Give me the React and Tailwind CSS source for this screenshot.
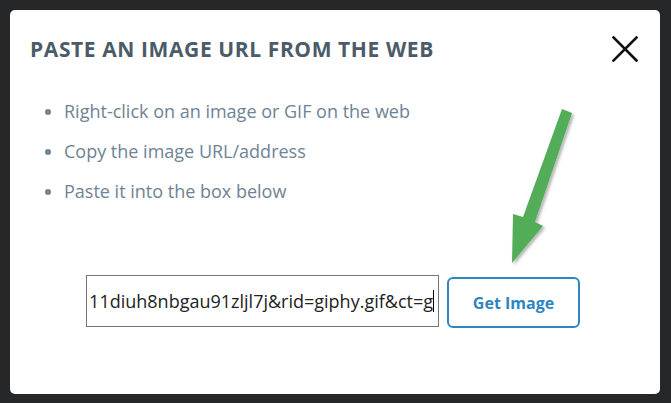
export default function App() {
  return (
    <div className="w-[671px] h-[403px] bg-[#252728] p-[10px] pr-[11px] pb-[9px]">
      <div className="relative w-full h-full bg-white rounded-[5px] flex flex-col" style={{ fontFamily: '"Open Sans", "Liberation Sans", sans-serif' }}>
        <div className="flex items-start justify-between pl-[20px] pr-[22px] pt-[21px]">
          <h1 className="text-[21px] font-bold text-[#4b5b68] leading-[36px] tracking-[0.6px]">PASTE AN IMAGE URL FROM THE WEB</h1>
          <button className="w-[26px] h-[26px] mt-[5px]">
            <svg viewBox="0 0 26 26" className="w-[26px] h-[26px]">
              <path d="M1.5 1.5 L24.5 24.5 M24.5 1.5 L1.5 24.5" stroke="#111" strokeWidth="2.6" strokeLinecap="square" fill="none" />
            </svg>
          </button>
        </div>
        <ul className="mt-[31px] pl-[35px] flex flex-col gap-[13px] text-[18px] text-[#6e8394] leading-[27px]">
          <li className="flex items-center gap-[13px]"><span className="w-[6px] h-[6px] rounded-full bg-[#6e8394]" />Right-click on an image or GIF on the web</li>
          <li className="flex items-center gap-[13px]"><span className="w-[6px] h-[6px] rounded-full bg-[#6e8394]" />Copy the image URL/address</li>
          <li className="flex items-center gap-[13px]"><span className="w-[6px] h-[6px] rounded-full bg-[#6e8394]" />Paste it into the box below</li>
        </ul>
        <div className="flex items-start pl-[76px] mt-[70px] gap-[8px]">
          <div className="w-[353px] h-[52px] border border-[#767676] flex items-center justify-end overflow-hidden pr-[4px] whitespace-nowrap text-[18px] text-[#222]">
            <span>11diuh8nbgau91zljl7j&amp;rid=giphy.gif&amp;ct=g</span>
            <span className="inline-block w-[1px] h-[22px] bg-black" />
          </div>
          <button className="mt-[2px] w-[133px] h-[51px] border-2 border-[#2e86c1] rounded-[6px] text-[16px] font-bold text-[#2e86c1]">Get Image</button>
        </div>
        <svg className="absolute left-0 top-0 pointer-events-none" width="650" height="384" viewBox="10 10 650 384">
          <defs>
            <filter id="sh" x="-50%" y="-50%" width="200%" height="200%">
              <feDropShadow dx="2" dy="2" stdDeviation="1.5" floodColor="#000" floodOpacity="0.3" />
            </filter>
          </defs>
          <polygon filter="url(#sh)" points="562,109 572,113 535,222 543,226 512,263 513,214 523,217" fill="#52ad59" />
        </svg>
      </div>
    </div>
  );
}
